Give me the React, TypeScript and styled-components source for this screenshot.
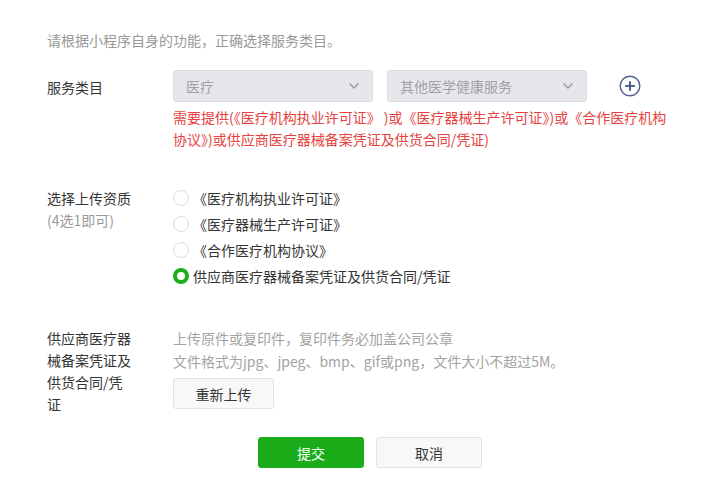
import React from "react";
import styled, { createGlobalStyle, css } from "styled-components";

const Global = createGlobalStyle`
  html, body { margin: 0; padding: 0; background: #fff; }
  body {
    font-family: "Noto Sans CJK SC", "Noto Sans", sans-serif;
    font-size: 14px;
    color: #353535;
  }
  * { box-sizing: border-box; }
`;

const Page = styled.div`
  width: 715px;
  height: 478px;
  padding: 29px 0 0 47px;
  display: flex;
  flex-direction: column;
`;

const Intro = styled.p`
  margin: 0;
  line-height: 22px;
  color: #999;
`;

const FormRow = styled.div<{ $top: number }>`
  display: grid;
  grid-template-columns: 126px 1fr;
  margin-top: ${(p) => p.$top}px;
`;

const Label = styled.div<{ $lh?: number; $pt?: number }>`
  width: 86px;
  line-height: ${(p) => p.$lh ?? 22}px;
  padding-top: ${(p) => p.$pt ?? 0}px;
  color: #353535;
`;

const SubLabel = styled.div`
  color: #9a9a9a;
`;

const Content = styled.div`
  display: flex;
  flex-direction: column;
`;

const SelectLine = styled.div`
  display: flex;
  align-items: center;
  gap: 14px;
`;

const Select = styled.div`
  width: 200px;
  height: 32px;
  border: 1px solid #dcdce0;
  border-radius: 3px;
  background: #e7e7eb;
  color: #a0a0a4;
  display: flex;
  align-items: center;
  justify-content: space-between;
  padding: 0 12px 0 12px;
  line-height: 30px;
`;

const AddButton = styled.button`
  margin-left: 18px;
  width: 22px;
  height: 22px;
  padding: 0;
  border: none;
  background: none;
  display: flex;
  align-items: center;
  justify-content: center;
`;

const Warning = styled.div`
  margin-top: 4px;
  max-width: 500px;
  line-height: 22px;
  color: #e64340;
`;

const RadioList = styled.div`
  display: flex;
  flex-direction: column;
  margin-top: -2px;
`;

const RadioItem = styled.label`
  display: flex;
  align-items: center;
  gap: 4px;
  height: 26px;
  line-height: 22px;
  color: #353535;
`;

const RadioMark = styled.span<{ $checked?: boolean }>`
  width: 16px;
  height: 16px;
  border-radius: 50%;
  flex: none;
  ${(p) =>
    p.$checked
      ? css`
          border: 4px solid #1aad19;
          background: #fff;
        `
      : css`
          border: 1px solid #d9d9d9;
          background: #fff;
        `}
`;

const Hint = styled.div`
  color: #a3a3a3;
  line-height: 23px;
`;

const Button = styled.button<{ $primary?: boolean; $w: number }>`
  width: ${(p) => p.$w}px;
  height: 31px;
  border-radius: 3px;
  font-family: inherit;
  font-size: 14px;
  padding: 0;
  cursor: pointer;
  ${(p) =>
    p.$primary
      ? css`
          background: #1aad19;
          border: 1px solid #1aad19;
          color: #fff;
        `
      : css`
          background: #f8f8f8;
          border: 1px solid #e2e2e2;
          color: #353535;
        `}
`;

const UploadBtnWrap = styled.div`
  margin-top: 5px;
`;

const Actions = styled.div`
  margin-top: 22px;
  padding-left: 211px;
  display: flex;
  gap: 12px;
`;

const Chevron = () => (
  <svg width="12" height="8" viewBox="0 0 12 8">
    <path d="M1.5 1.5 L6 6 L10.5 1.5" fill="none" stroke="#9c9ca0" strokeWidth="1.5" />
  </svg>
);

const PlusCircle = () => (
  <svg width="22" height="22" viewBox="0 0 22 22">
    <circle cx="11" cy="11" r="9.8" fill="none" stroke="#4f6092" strokeWidth="1.4" />
    <path d="M11 6.2 V15.8 M6.2 11 H15.8" stroke="#4f6092" strokeWidth="2" />
  </svg>
);

const options = [
  "《医疗机构执业许可证》",
  "《医疗器械生产许可证》",
  "《合作医疗机构协议》",
  "供应商医疗器械备案凭证及供货合同/凭证",
];

export default function App() {
  return (
    <>
      <Global />
      <Page>
        <Intro>请根据小程序自身的功能，正确选择服务类目。</Intro>

        <FormRow $top={19}>
          <Label $pt={6}>服务类目</Label>
          <Content>
            <SelectLine>
              <Select>
                <span>医疗</span>
                <Chevron />
              </Select>
              <Select>
                <span>其他医学健康服务</span>
                <Chevron />
              </Select>
              <AddButton aria-label="add">
                <PlusCircle />
              </AddButton>
            </SelectLine>
            <Warning>
              需要提供(《医疗机构执业许可证》 )或《医疗器械生产许可证》)或《合作医疗机构协议》)或供应商医疗器械备案凭证及供货合同/凭证)
            </Warning>
          </Content>
        </FormRow>

        <FormRow $top={37}>
          <Label>
            选择上传资质
            <SubLabel>(4选1即可)</SubLabel>
          </Label>
          <RadioList>
            {options.map((o, i) => (
              <RadioItem key={o}>
                <RadioMark $checked={i === 3} />
                <span>{o}</span>
              </RadioItem>
            ))}
          </RadioList>
        </FormRow>

        <FormRow $top={38}>
          <Label>供应商医疗器械备案凭证及供货合同/凭证</Label>
          <Content>
            <Hint>上传原件或复印件，复印件务必加盖公司公章</Hint>
            <Hint>文件格式为jpg、jpeg、bmp、gif或png，文件大小不超过5M。</Hint>
            <UploadBtnWrap>
              <Button $w={101}>重新上传</Button>
            </UploadBtnWrap>
          </Content>
        </FormRow>

        <Actions>
          <Button $primary $w={106}>提交</Button>
          <Button $w={106}>取消</Button>
        </Actions>
      </Page>
    </>
  );
}
